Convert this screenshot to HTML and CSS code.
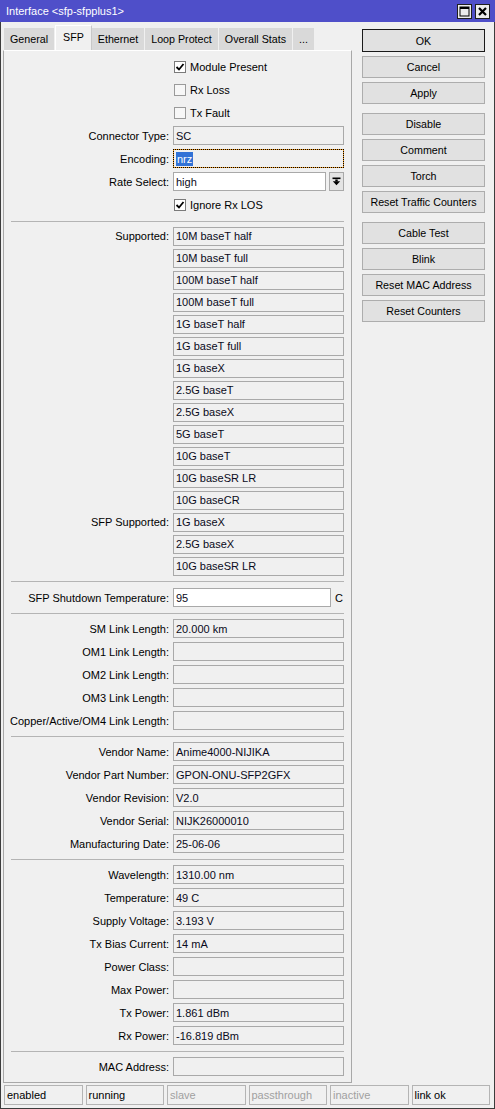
FILE: index.html
```html
<!DOCTYPE html>
<html>
<head>
<meta charset="utf-8">
<link rel="stylesheet" href="styles.css">
</head>
<body>
<div class="window">
  <div class="titlebar">
    <span class="title">Interface &lt;sfp-sfpplus1&gt;</span>
    <div class="tb-buttons">
      <span class="tb-btn"><svg width="13" height="13" viewBox="0 0 13 13"><rect x="2" y="2" width="9" height="9" fill="none" stroke="#000" stroke-width="1"/><rect x="2" y="2" width="9" height="2" fill="#000"/></svg></span>
      <span class="tb-btn"><svg width="13" height="13" viewBox="0 0 13 13"><path d="M3 3 L10 10 M10 3 L3 10" stroke="#000" stroke-width="2.2"/></svg></span>
    </div>
  </div>
  <div class="client">
    <div class="main">
      <div class="left">
        <div class="tabs">
          <span class="tab">General</span>
          <span class="tab active">SFP</span>
          <span class="tab">Ethernet</span>
          <span class="tab">Loop Protect</span>
          <span class="tab">Overall Stats</span>
          <span class="tab">...</span>
        </div>
        <div class="panel">
          <div class="row"><span></span><label class="check"><span class="box on"><svg width="10" height="10" viewBox="0 0 10 10"><path d="M1.5 5 L4 7.5 L8.5 2" fill="none" stroke="#000" stroke-width="1.8"/></svg></span>Module Present</label></div>
          <div class="row"><span></span><label class="check"><span class="box"></span>Rx Loss</label></div>
          <div class="row"><span></span><label class="check"><span class="box"></span>Tx Fault</label></div>
          <div class="row"><span class="lbl">Connector Type:</span><span class="field">SC</span></div>
          <div class="row"><span class="lbl">Encoding:</span><span class="field focus"><span class="sel">nrz</span></span></div>
          <div class="row"><span class="lbl">Rate Select:</span><span class="combo"><span class="field white">high</span><span class="dd"><svg width="9" height="9" viewBox="0 0 9 9"><rect x="0.5" y="0.5" width="8" height="1.6" fill="#000"/><rect x="3.3" y="2.5" width="2.4" height="2" fill="#000"/><path d="M0.8 4.3 H8.2 L4.5 8.3 Z" fill="#000"/></svg></span></span></div>
          <div class="row"><span></span><label class="check"><span class="box on"><svg width="10" height="10" viewBox="0 0 10 10"><path d="M1.5 5 L4 7.5 L8.5 2" fill="none" stroke="#000" stroke-width="1.8"/></svg></span>Ignore Rx LOS</label></div>
          <div class="sep sep1"></div>
          <div class="row s"><span class="lbl">Supported:</span><span class="field">10M baseT half</span></div>
          <div class="row s"><span></span><span class="field">10M baseT full</span></div>
          <div class="row s"><span></span><span class="field">100M baseT half</span></div>
          <div class="row s"><span></span><span class="field">100M baseT full</span></div>
          <div class="row s"><span></span><span class="field">1G baseT half</span></div>
          <div class="row s"><span></span><span class="field">1G baseT full</span></div>
          <div class="row s"><span></span><span class="field">1G baseX</span></div>
          <div class="row s"><span></span><span class="field">2.5G baseT</span></div>
          <div class="row s"><span></span><span class="field">2.5G baseX</span></div>
          <div class="row s"><span></span><span class="field">5G baseT</span></div>
          <div class="row s"><span></span><span class="field">10G baseT</span></div>
          <div class="row s"><span></span><span class="field">10G baseSR LR</span></div>
          <div class="row s"><span></span><span class="field">10G baseCR</span></div>
          <div class="row s"><span class="lbl">SFP Supported:</span><span class="field">1G baseX</span></div>
          <div class="row s"><span></span><span class="field">2.5G baseX</span></div>
          <div class="row s"><span></span><span class="field">10G baseSR LR</span></div>
          <div class="sep sep2"></div>
          <div class="row"><span class="lbl">SFP Shutdown Temperature:</span><span class="unit-wrap"><span class="field white">95</span><span class="unit">C</span></span></div>
          <div class="sep"></div>
          <div class="row"><span class="lbl">SM Link Length:</span><span class="field">20.000 km</span></div>
          <div class="row"><span class="lbl">OM1 Link Length:</span><span class="field"></span></div>
          <div class="row"><span class="lbl">OM2 Link Length:</span><span class="field"></span></div>
          <div class="row"><span class="lbl">OM3 Link Length:</span><span class="field"></span></div>
          <div class="row"><span class="lbl">Copper/Active/OM4 Link Length:</span><span class="field"></span></div>
          <div class="sep"></div>
          <div class="row"><span class="lbl">Vendor Name:</span><span class="field">Anime4000-NIJIKA</span></div>
          <div class="row"><span class="lbl">Vendor Part Number:</span><span class="field">GPON-ONU-SFP2GFX</span></div>
          <div class="row"><span class="lbl">Vendor Revision:</span><span class="field">V2.0</span></div>
          <div class="row"><span class="lbl">Vendor Serial:</span><span class="field">NIJK26000010</span></div>
          <div class="row"><span class="lbl">Manufacturing Date:</span><span class="field">25-06-06</span></div>
          <div class="sep"></div>
          <div class="row"><span class="lbl">Wavelength:</span><span class="field">1310.00 nm</span></div>
          <div class="row"><span class="lbl">Temperature:</span><span class="field">49 C</span></div>
          <div class="row"><span class="lbl">Supply Voltage:</span><span class="field">3.193 V</span></div>
          <div class="row"><span class="lbl">Tx Bias Current:</span><span class="field">14 mA</span></div>
          <div class="row"><span class="lbl">Power Class:</span><span class="field"></span></div>
          <div class="row"><span class="lbl">Max Power:</span><span class="field"></span></div>
          <div class="row"><span class="lbl">Tx Power:</span><span class="field">1.861 dBm</span></div>
          <div class="row"><span class="lbl">Rx Power:</span><span class="field">-16.819 dBm</span></div>
          <div class="sep"></div>
          <div class="row"><span class="lbl">MAC Address:</span><span class="field"></span></div>
        </div>
      </div>
      <div class="right">
        <div class="group">
          <button class="btn default">OK</button>
          <button class="btn">Cancel</button>
          <button class="btn">Apply</button>
        </div>
        <div class="group">
          <button class="btn">Disable</button>
          <button class="btn">Comment</button>
          <button class="btn">Torch</button>
          <button class="btn">Reset Traffic Counters</button>
        </div>
        <div class="group">
          <button class="btn">Cable Test</button>
          <button class="btn">Blink</button>
          <button class="btn">Reset MAC Address</button>
          <button class="btn">Reset Counters</button>
        </div>
      </div>
    </div>
    <div class="status">
      <span class="st">enabled</span>
      <span class="st">running</span>
      <span class="st dim">slave</span>
      <span class="st dim">passthrough</span>
      <span class="st dim">inactive</span>
      <span class="st">link ok</span>
    </div>
  </div>
</div>
</body>
</html>
```
FILE: styles.css
```css
* { box-sizing: border-box; }
html, body { margin: 0; padding: 0; background: #f0f0f0; }
body {
  font-family: "Liberation Sans", Arial, sans-serif;
  font-size: 11px;
  color: #000;
}
.window {
  width: 495px;
  height: 1109px;
  display: flex;
  flex-direction: column;
  background: #f0f0f0;
}
.titlebar {
  height: 22px;
  flex: none;
  background: #4f4fc9;
  display: flex;
  align-items: center;
  justify-content: space-between;
  padding: 0 5px 0 6px;
  color: #fff;
  font-size: 11px;
}
.tb-buttons { display: flex; gap: 3px; }
.tb-btn {
  width: 15px;
  height: 15px;
  border: 1px solid #1e1e1e;
  background: #ececec;
  display: flex;
  align-items: center;
  justify-content: center;
}
.client {
  flex: 1;
  display: flex;
  flex-direction: column;
  border: 1px solid #3c3c3c;
  border-top: none;
  padding: 0 4px 3px 2px;
}
.main {
  flex: 1;
  display: flex;
  gap: 10px;
}
.left {
  width: 349px;
  display: flex;
  flex-direction: column;
}
.tabs {
  height: 28px;
  display: flex;
  align-items: flex-end;
  padding-left: 1px;
  font-size: 10.7px;
}
.tab {
  height: 22px;
  padding: 0 6px;
  background: #d9d9d9;
  border-right: 1px solid #f0f0f0;
  display: flex;
  align-items: center;
  justify-content: center;
}
.tab.active {
  height: 25px;
  background: #f0f0f0;
  border: 1px solid #fff;
  border-bottom: none;
  border-right: 1px solid #c8c8c8;
  padding: 0 7px 3px;
}
.panel {
  flex: 1;
  border: 1px solid #a8a8a8;
  border-top-color: #ffffff;
  padding-top: 4px;
}
.row {
  display: grid;
  grid-template-columns: 165px 171px;
  column-gap: 4px;
  height: 23px;
  align-items: center;
}
.row.s { height: 22px; }
.lbl { text-align: right; white-space: nowrap; }
.field {
  height: 19px;
  border: 1px solid #a9a9a9;
  background: #f0f0f0;
  padding-left: 2px;
  display: flex;
  align-items: center;
  white-space: nowrap;
  overflow: hidden;
  color: #0a0a20;
}
.field.white { background: #fff; }
.field.focus {
  border: 1px dotted #000;
  background: linear-gradient(#f0f0f0, #f0f0f0) padding-box, #f09a20 border-box;
}
.sel {
  background: #3272d6;
  color: #fff;
  padding: 0 1px;
  line-height: 14px;
}
.combo {
  display: flex;
  gap: 3px;
}
.combo .field { flex: 1; }
.dd {
  width: 15px;
  height: 19px;
  border: 1px solid #a9a9a9;
  background: #e4e4e4;
  display: flex;
  align-items: center;
  justify-content: center;
}
.unit-wrap {
  display: flex;
  align-items: center;
  gap: 4px;
  width: 172px;
}
.unit-wrap .field { width: 158px; }
.check {
  display: flex;
  align-items: center;
  gap: 4px;
  padding-left: 1px;
  white-space: nowrap;
}
.box {
  width: 12px;
  height: 12px;
  border: 1px solid #9a9a9a;
  background: #f7f7f7;
  display: flex;
  align-items: center;
  justify-content: center;
}
.box.on { background: #fff; border-color: #7a7a7a; }
.sep {
  height: 1px;
  background: #b4b4b4;
  margin: 4px 7px 3px 7px;
  width: 333px;
}
.sep1 { margin-top: 5px; }
.sep2 { margin-top: 4px; margin-bottom: 4px; }
.right {
  width: 123px;
  padding-top: 7px;
  display: flex;
  flex-direction: column;
  gap: 9px;
}
.group {
  display: flex;
  flex-direction: column;
  gap: 4px;
}
.btn {
  height: 22px;
  border: 1px solid #adadad;
  background: #e1e1e1;
  font-family: "Liberation Sans", Arial, sans-serif;
  font-size: 10.7px;
  color: #000;
  padding: 0;
  white-space: nowrap;
}
.btn.default { border-color: #1a1a1a; height: 23px; }
.status {
  height: 20px;
  margin-top: 2px;
  display: flex;
  gap: 3px;
  padding-left: 1px;
}
.st {
  flex: 1;
  border: 1px solid #b4b4b4;
  padding-left: 2px;
  display: flex;
  align-items: center;
  color: #000;
}
.st.dim { color: #a0a0a0; }
```
